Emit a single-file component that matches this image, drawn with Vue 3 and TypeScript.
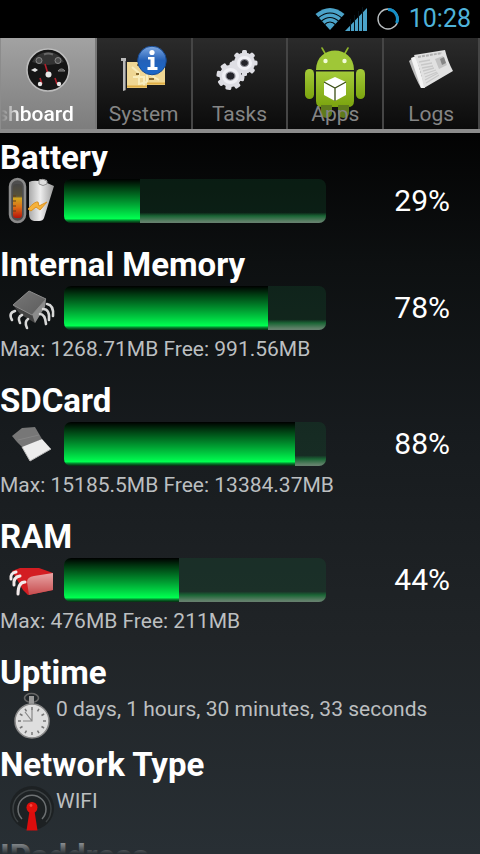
<script setup lang="ts">
type IconName = 'battery' | 'chip' | 'card' | 'ram' | 'watch' | 'network'

interface Meter {
  title: string
  icon: IconName
  percent: number
  detail?: string
}

interface Fact {
  title: string
  icon?: IconName
  value?: string
}

interface Tab {
  id: string
  label: string
}

const tabs: Tab[] = [
  { id: 'dashboard', label: 'Dashboard' },
  { id: 'system', label: 'System' },
  { id: 'tasks', label: 'Tasks' },
  { id: 'apps', label: 'Apps' },
  { id: 'logs', label: 'Logs' },
]

const activeTab = 'dashboard'

const meters: Meter[] = [
  { title: 'Battery', icon: 'battery', percent: 29 },
  { title: 'Internal Memory', icon: 'chip', percent: 78, detail: 'Max: 1268.71MB Free: 991.56MB' },
  { title: 'SDCard', icon: 'card', percent: 88, detail: 'Max: 15185.5MB Free: 13384.37MB' },
  { title: 'RAM', icon: 'ram', percent: 44, detail: 'Max: 476MB Free: 211MB' },
]

const facts: Fact[] = [
  { title: 'Uptime', icon: 'watch', value: '0 days, 1 hours, 30 minutes, 33 seconds' },
  { title: 'Network Type', icon: 'network', value: 'WIFI' },
  { title: 'IPaddress' },
]

const gearTeeth = [0, 45, 90, 135, 180, 225, 270, 315]
const clockMarks = Array.from({ length: 12 }, (_, i) => i * 30)
</script>

<template>
  <div class="screen">
    <header class="status">
      <svg class="wifi" viewBox="0 0 30 24" aria-hidden="true">
        <path d="M15 23 L0.500 7 Q15 -5 29.500 7 Z" fill="#4ba3c9" />
        <g fill="none" stroke="#03080b" stroke-width="1.100">
          <path d="M3 11 Q15 1 27 11" />
          <path d="M6 14.500 Q15 6.500 24 14.500" />
          <path d="M9 18 Q15 12 21 18" />
        </g>
      </svg>
      <svg class="signal" viewBox="0 0 22 24" aria-hidden="true">
        <path d="M0 24 L22 1 V24 Z" fill="#4ba3c9" />
        <path d="M5.500 12V24M9.500 8V24M13.500 4V24M17.500 0V24" stroke="#061219" stroke-width="1" />
      </svg>
      <svg class="ring" viewBox="0 0 24 24" aria-hidden="true">
        <circle cx="12" cy="12" r="10" fill="none" stroke="#b9bec0" stroke-width="1.400" />
        <path d="M12 2.500 A9.500 9.500 0 0 1 20.500 16" fill="none" stroke="#1590c8" stroke-width="3" />
      </svg>
      <time class="clock">10:28</time>
    </header>

    <nav class="tabs" role="tablist">
      <button
        v-for="tab in tabs"
        :key="tab.id"
        type="button"
        role="tab"
        class="tab"
        :class="{ active: tab.id === activeTab }"
        :aria-selected="tab.id === activeTab"
      >
        <svg v-if="tab.id === 'dashboard'" class="tab-icon" viewBox="0 0 48 48" aria-hidden="true">
          <circle cx="24" cy="24" r="21" fill="#161616" stroke="#bcbcbc" stroke-width="1.500" />
          <path d="M8 16 A18 18 0 0 1 40 16 Q24 22 8 16Z" fill="#333" />
          <g fill="#4b4b4b" stroke="#888" stroke-width="1">
            <circle cx="15" cy="14.500" r="3" /><circle cx="34" cy="14.500" r="3" />
            <path d="M34 25a4 4 0 0 1 7 0z" />
          </g>
          <path d="M20 8.500q4-2 9 0" stroke="#666" stroke-width="2" fill="none" />
          <path d="M7 24l4-2 3 2-3 2z" fill="#e3e3e3" />
          <path d="M21 18l3 10M16 32l2 6M31 32l2 6" stroke="#b3202c" stroke-width="1.600" />
          <circle cx="24.500" cy="28.500" r="3" fill="#e8e8e8" />
          <circle cx="16" cy="38" r="2.200" fill="#e8e8e8" /><circle cx="35" cy="38" r="2.200" fill="#e8e8e8" />
        </svg>

        <svg v-else-if="tab.id === 'system'" class="tab-icon" viewBox="0 0 48 48" aria-hidden="true">
          <defs>
            <linearGradient id="info" x1="0" y1="0" x2="0" y2="1">
              <stop offset="0" stop-color="#7fa9e2" /><stop offset=".5" stop-color="#2461b8" /><stop offset="1" stop-color="#1a68c9" />
            </linearGradient>
          </defs>
          <path d="M7 16H45V39H27V42H7z" fill="#efd794" />
          <path d="M12 21l7 6v11l8-2v-9l12 7M13 31h11v9" fill="none" stroke="#f8edbd" stroke-width="2" />
          <path d="M17 18h4v2h-4zM16 27h3v2h-3zM29 32h5v2h-5z" fill="#8a6b30" />
          <path d="M7 40.500H27M27 37.500H45" fill="none" stroke="#dfae45" stroke-width="2" />
          <path d="M1 12h5v32l-3 1V15H1z" fill="#b9b9b9" />
          <path d="M5.500 15v29" stroke="#787878" stroke-width="1" />
          <circle cx="32" cy="14.500" r="14.300" fill="url(#info)" stroke="#174a92" stroke-width="1" />
          <circle cx="32" cy="6.500" r="2.600" fill="#fff" />
          <path d="M28 11h6.500v10h3v3h-10v-3h3v-7.500h-2.500z" fill="#fff" />
        </svg>

        <svg v-else-if="tab.id === 'tasks'" class="tab-icon" viewBox="0 0 48 48" aria-hidden="true">
          <g fill="#dedee4">
            <rect v-for="a in gearTeeth" :key="a" x="12.500" y="16" width="6" height="8" rx="1.500" :transform="`rotate(${a + 10} 15.500 30)`" />
            <circle cx="15.500" cy="30" r="11" />
            <rect v-for="a in gearTeeth" :key="a + 500" x="27" y="4" width="5" height="7" rx="1.500" :transform="`rotate(${a} 29.500 17)`" />
            <circle cx="29.500" cy="17" r="10.500" />
          </g>
          <ellipse cx="15.500" cy="30" rx="7" ry="6.500" fill="none" stroke="#f0f0f5" stroke-width="3" />
          <ellipse cx="29.500" cy="17" rx="6" ry="5.500" fill="none" stroke="#f0f0f5" stroke-width="3" />
          <ellipse cx="15.500" cy="30" rx="4.500" ry="4" fill="#24242a" stroke="#92929b" stroke-width="1" />
          <ellipse cx="29.500" cy="17" rx="4" ry="3.500" fill="#24242a" stroke="#92929b" stroke-width="1" />
        </svg>

        <svg v-else-if="tab.id === 'apps'" class="tab-icon android" viewBox="0 0 62 72" aria-hidden="true">
          <defs>
            <linearGradient id="droid" x1="0" y1="0" x2="0" y2="1">
              <stop offset="0" stop-color="#a4ca39" /><stop offset="1" stop-color="#7ba40e" />
            </linearGradient>
          </defs>
          <path d="M18 1l4 7M44 1l-4 7" stroke="#8eb52b" stroke-width="1.600" stroke-linecap="round" />
          <path d="M12 23C12 -3 50 -3 50 23z" fill="#9fc737" />
          <g fill="url(#droid)">
            <path d="M12 24.500h38v29.500q0 6-6 6H18q-6 0-6-6z" />
            <rect x="1" y="22" width="9" height="30" rx="4.500" />
            <rect x="52" y="22" width="9" height="30" rx="4.500" />
          </g>
          <path d="M17 58h11v8a5.500 5 0 0 1-11 0zM34 58h11v8a5.500 5 0 0 1-11 0z" fill="#5f7b1c" />
          <circle cx="21.500" cy="14" r="2.200" fill="#f1fbd8" /><circle cx="40.500" cy="14" r="2.200" fill="#f1fbd8" />
          <path d="M31 30l11 5v13l-11 6-11-6V35z" fill="#fff" />
          <path d="M20 35l11 6 11-6M31 41v13" fill="none" stroke="#3c4f16" stroke-width="1.300" />
        </svg>

        <svg v-else class="tab-icon" viewBox="0 0 48 48" aria-hidden="true">
          <path d="M2 15L6 12 18 38 14 42Q8 32 2 15z" fill="#bdbdbd" />
          <path d="M4 12L9 10 18 42 14 42z" fill="#f3f3f3" />
          <path d="M7 9L38 4Q41 16 46 25L17 42Q14 24 7 9z" fill="#e1e1e1" />
          <path d="M11 11l24-4" stroke="#b0b0b0" stroke-width="2" stroke-dasharray="3 1" />
          <path d="M12 16l11-2M14 19l11-2M15 22l11-2M16 25l11-3M17 28l12-4M18 31l12-5M18 34l13-7M19 37l13-8" stroke="#c8c8c8" stroke-width="1.300" />
          <path d="M28 13l8-3 4 9-8 4z" fill="#c2c2c2" />
          <path d="M33 13l4-2 2 6-4 2z" fill="#858585" />
        </svg>
        <span class="tab-label"><span>{{ tab.label }}</span></span>
      </button>
    </nav>

    <main class="content">
      <section v-for="m in meters" :key="m.title" class="block">
        <h2>{{ m.title }}</h2>
        <div class="meter-row">
          <svg v-if="m.icon === 'battery'" class="icon" viewBox="0 0 48 48" aria-hidden="true">
            <defs>
              <linearGradient id="heat" x1="0" y1="0" x2="0" y2="1">
                <stop offset="0" stop-color="#454545" /><stop offset=".36" stop-color="#595238" />
                <stop offset=".42" stop-color="#d0a51f" /><stop offset=".68" stop-color="#dd6d16" /><stop offset="1" stop-color="#b4140c" />
              </linearGradient>
              <linearGradient id="cell" x1="0" y1="0" x2="1" y2="0">
                <stop offset="0" stop-color="#aaa" /><stop offset=".45" stop-color="#eee" /><stop offset="1" stop-color="#999" />
              </linearGradient>
            </defs>
            <rect x="2" y="2" width="15" height="43" rx="7.500" fill="#4e4e4e" stroke="#8a8a8a" stroke-width="2.500" />
            <rect x="5" y="7" width="9" height="34" rx="3" fill="url(#heat)" />
            <path d="M5 19h3M5 24h3M5 29h3M5 34h3" stroke="#653d12" stroke-width="1" />
            <path d="M21 5q4-2 10-1l1-2 7 1v3l7 3-10 32q-1 3-5 3h-5q-5-1-5-7z" fill="url(#cell)" />
            <path d="M31 3q4-2 8 1v3q-4 3-8 0z" fill="#dedede" stroke="#8f8f8f" stroke-width="1" />
            <path d="M20 32q7-8 10-7l1 4 8-4-7 8-4-3-5 4z" fill="#f5b23c" stroke="#dd9220" stroke-width="1" />
          </svg>

          <svg v-else-if="m.icon === 'chip'" class="icon" viewBox="0 0 48 48" aria-hidden="true">
            <defs>
              <linearGradient id="die" x1="0" y1="0" x2="1" y2="1">
                <stop offset="0" stop-color="#777" /><stop offset="1" stop-color="#5c5c5c" />
              </linearGradient>
            </defs>
            <path d="M5 21L21 7 38 15 37 22 27 39 12 30z" fill="#444" />
            <path d="M24 30L38 15 37 23 27 39z" fill="#8c8c8c" />
            <path d="M5 21L21 7 38 15 24 31z" fill="url(#die)" stroke="#8a8a8a" stroke-width="1" />
            <g fill="none" stroke="#d8d8d8" stroke-width="2.600" stroke-linecap="round">
              <path d="M7 27q-7 2-3 9M14 31q-5 2-2 8M20 35q-4 3-1 9" />
              <path d="M35 25q7 0 6 11M39 20q7 1 6 12M32 30q5 0 6 10" />
            </g>
          </svg>

          <svg v-else-if="m.icon === 'card'" class="icon" viewBox="0 0 48 48" aria-hidden="true">
            <path d="M4 16L14 8 27 7 34 19 15 28 9 22z" fill="#777" />
            <path d="M10 20L31 15" stroke="#858585" stroke-width="1" />
            <path d="M14 27L34 19 43 29 22 41z" fill="#ededed" />
            <path d="M14 27l8 14 21-12" fill="none" stroke="#b8b8b8" stroke-width="1" />
          </svg>

          <svg v-else-if="m.icon === 'ram'" class="icon" viewBox="0 0 48 48" aria-hidden="true">
            <defs>
              <linearGradient id="stick" x1="0" y1="0" x2="0" y2="1">
                <stop offset="0" stop-color="#e9a5a5" /><stop offset="1" stop-color="#c64b4d" />
              </linearGradient>
            </defs>
            <path d="M4 15L12 12H31L45 17V34L20 39 15 34z" fill="#d31d22" />
            <path d="M19 26Q19 21 26 20L45 17V34L21 39z" fill="url(#stick)" />
            <g fill="none" stroke="#f2eaea" stroke-width="3" stroke-linecap="round">
              <path d="M8 16q-6 1-5 7M12 20q-7 1-6 9M17 26q-7 0-7 12" />
            </g>
          </svg>

          <div class="bar" role="progressbar" :aria-label="m.title" :aria-valuenow="m.percent" aria-valuemin="0" aria-valuemax="100">
            <div class="fill" :style="{ width: m.percent + '%' }"></div>
            <div class="rest"></div>
          </div>
          <span class="percent">{{ m.percent }}%</span>
        </div>
        <p v-if="m.detail" class="detail">{{ m.detail }}</p>
      </section>

      <section v-for="f in facts" :key="f.title" class="block fact">
        <h2>{{ f.title }}</h2>
        <div v-if="f.value" class="fact-row">
          <svg v-if="f.icon === 'watch'" class="icon" viewBox="0 0 48 48" aria-hidden="true">
            <ellipse cx="23.500" cy="6" rx="7" ry="4.500" fill="none" stroke="#666" stroke-width="1.600" />
            <path d="M21 4h5v8h-5z" fill="#999" />
            <circle cx="24" cy="29" r="17" fill="#dedede" stroke="#888" stroke-width="1.500" />
            <path v-for="a in clockMarks" :key="a" d="M24 15v3" stroke="#777" stroke-width="1.500" :transform="`rotate(${a} 24 29)`" />
            <path d="M24 17v12H15M24 29l-7-9" fill="none" stroke="#888" stroke-width="1.200" />
          </svg>
          <svg v-else class="icon" viewBox="0 0 48 48" aria-hidden="true">
            <circle cx="24" cy="24" r="22" fill="#1d2123" />
            <g fill="none" stroke-width="1.500">
              <path d="M14 35a14 14 0 1 1 20 0" stroke="#6d7173" />
              <path d="M10 38a19 19 0 1 1 28 0" stroke="#3c4143" />
            </g>
            <path d="M21.500 27h5l3 19.500h-11z" fill="#dc0d0d" />
            <circle cx="24" cy="23.500" r="5.500" fill="#e0100c" />
            <circle cx="23" cy="21.500" r="1.400" fill="#f8483d" />
          </svg>
          <p>{{ f.value }}</p>
        </div>
      </section>
    </main>
  </div>
</template>

<style>
body {
  margin: 0;
  background: #000;
}
</style>

<style scoped>
.screen {
  position: relative;
  display: flex;
  flex-direction: column;
  height: 100vh;
  overflow: hidden;
  background: #000;
  color: #fff;
  font-family: Roboto, "Liberation Sans", sans-serif;
}

.status {
  display: flex;
  flex: none;
  align-items: center;
  justify-content: flex-end;
  height: 38px;
  padding-right: 9px;
  color: #4fb3da;
}

.wifi {
  width: 30px;
  height: 24px;
}

.signal {
  width: 22px;
  height: 24px;
  margin-right: 9px;
}

.ring {
  width: 24px;
  height: 24px;
  margin-right: 9px;
}

.clock {
  font-size: 25px;
  line-height: 38px;
}

.tabs {
  display: grid;
  flex: none;
  grid-template-columns: repeat(5, 1fr);
  height: 91px;
  padding-left: 1px;
  border-bottom: 4px solid #8c8c8c;
  background: #8c8c8c;
}

.tab {
  display: grid;
  min-width: 0;
  padding: 0;
  border: 0;
  border-right: 2px solid #454545;
  background: linear-gradient(#2b2b2b, #0b0b0b);
  color: #858585;
  font: 21px/30px Roboto, "Liberation Sans", sans-serif;
}

.tab.active {
  border-right-color: #777;
  background: linear-gradient(#a2a2a2, #7d7d7d);
  color: #fff;
  font-weight: 500;
}

.tab-icon,
.tab-label {
  grid-area: 1 / 1;
}

.tab-icon {
  align-self: start;
  justify-self: center;
  width: 48px;
  height: 48px;
  margin-top: 8px;
}

.tab-icon.android {
  width: 62px;
  height: 72px;
  margin-top: 9px;
}

.tab-label {
  display: flex;
  align-self: end;
  justify-content: center;
  overflow: hidden;
  white-space: nowrap;
}

.active .tab-label {
  justify-content: flex-end;
  padding-right: 21px;
  mask-image: linear-gradient(90deg, transparent, #000 20px);
}

.content {
  flex: 1;
  min-height: 0;
  overflow-y: auto;
  padding-top: 6px;
  background: linear-gradient(#030303, #0d1011 18%, #171b1e 42%, #202427 70%, #282f34);
  scrollbar-width: none;
}

.screen::after {
  position: absolute;
  right: 0;
  bottom: 0;
  left: 0;
  height: 24px;
  background: linear-gradient(transparent, #282f34);
  content: "";
  pointer-events: none;
}

.block {
  margin-bottom: 21px;
}

.fact {
  margin-bottom: 6px;
}

h2 {
  margin: 0;
  font-size: 33px;
  font-weight: 700;
  line-height: 38px;
}

.meter-row {
  display: grid;
  grid-template-columns: 64px 1fr 154px;
  align-items: center;
  height: 48px;
}

.icon {
  flex: none;
  width: 48px;
  height: 48px;
  margin-left: 8px;
}

.bar {
  display: flex;
  height: 44px;
  border-radius: 7px;
  overflow: hidden;
  background: rgba(18, 90, 50, 0.25);
}

.fill {
  background: linear-gradient(#000, #003d12 20%, #00a534 58%, #00ff50 90%, #04732a 95%, #07280f);
}

.rest {
  flex: 1;
  background: linear-gradient(transparent 76%, #1a6535 84%, #5d8067 96%, #688070);
}

.percent {
  padding-right: 30px;
  font-size: 30px;
  line-height: 32px;
  text-align: right;
}

.detail,
.fact-row p {
  margin: 0;
  color: #bcbfc0;
  font-size: 21px;
  line-height: 34px;
}

.detail {
  height: 29px;
}

.fact-row {
  display: flex;
  height: 48px;
}
</style>
